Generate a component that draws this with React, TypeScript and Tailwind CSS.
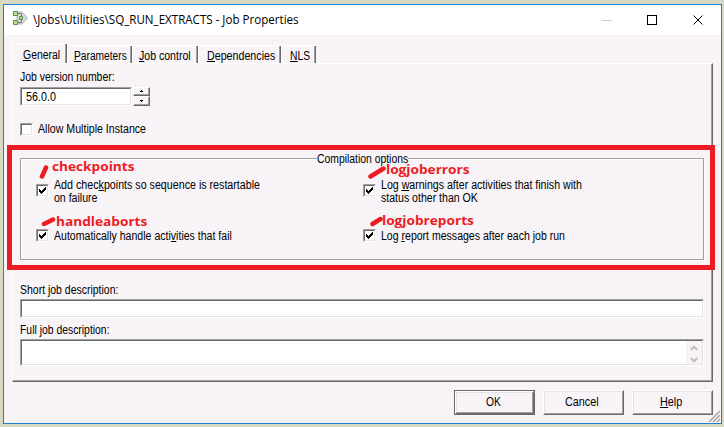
import type { ReactNode } from "react";

const raised =
  "border border-t-white border-l-white border-r-[#696969] border-b-[#696969]";
const sunken =
  "border border-t-[#a0a0a0] border-l-[#a0a0a0] border-r-white border-b-white";
const sunkenInner =
  "border border-t-[#696969] border-l-[#696969] border-r-[#e3e3e3] border-b-[#e3e3e3]";

function Text({ children, className = "" }: { children: ReactNode; className?: string }) {
  return (
    <span className={`block w-max origin-left whitespace-pre text-[12px] leading-[13px] ${className}`}>
      {children}
    </span>
  );
}

function Key({ children }: { children: ReactNode }) {
  return <span className="border-b border-black leading-none inline-block h-[12px]">{children}</span>;
}

function Checkbox({ checked = false }: { checked?: boolean }) {
  return (
    <span className={`block h-[13px] w-[13px] shrink-0 ${sunken}`}>
      <span className={`block h-full w-full bg-white ${sunkenInner}`}>
        {checked && (
          <svg width="9" height="9" viewBox="0 0 9 9" shapeRendering="crispEdges">
            <path d="M1 3h1v3H1zM2 4h1v3H2zM3 5h1v3H3zM4 4h1v3H4zM5 3h1v3H5zM6 2h1v3H6zM7 1h1v3H7z" fill="#000" />
          </svg>
        )}
      </span>
    </span>
  );
}

function Tab({ children, className }: { children: ReactNode; className: string }) {
  return (
    <div className={`h-[18px] rounded-tl-[2px] border-t border-l border-white ${className}`}>
      <div className="h-full border-r border-r-[#696969]">
        <div className="h-full border-r border-r-[#a0a0a0] pt-[4px]">{children}</div>
      </div>
    </div>
  );
}

function Button({ children, primary = false }: { children: ReactNode; primary?: boolean }) {
  return (
    <button
      className={`block h-[25px] w-[81px] ${primary ? "border border-[#696969]" : ""}`}
    >
      <span className={`block h-full w-full ${raised}`}>
        <span className="flex h-full w-full items-center justify-center border border-t-[#e3e3e3] border-l-[#e3e3e3] border-r-[#a0a0a0] border-b-[#a0a0a0]">
          {children}
        </span>
      </span>
    </button>
  );
}

function Spin({ up = false }: { up?: boolean }) {
  return (
    <div className={`w-[17px] ${up ? "h-[9px]" : "h-[10px]"} ${raised}`}>
      <div className="flex h-full items-center justify-center border-r border-b border-[#a0a0a0]">
        <svg width="3" height="2" viewBox="0 0 3 2" shapeRendering="crispEdges">
          <path d={up ? "M1 0h1v1h1v1H0V1h1z" : "M0 0h3v1H2v1H1V1H0z"} />
        </svg>
      </div>
    </div>
  );
}

function Note({ children, className }: { children: ReactNode; className: string }) {
  return (
    <span
      className={`absolute origin-left scale-x-[1.05] whitespace-nowrap font-['Open_Sans',sans-serif] text-[13px] leading-[12px] font-bold text-[#ed1c24] ${className}`}
    >
      {children}
    </span>
  );
}

export default function App() {
  return (
    <div className="h-[427px] w-[724px] overflow-hidden bg-[#d6dac2] pt-1 pl-[3px] font-['Liberation_Sans',Arial,sans-serif] text-black">
      <div className="relative flex h-[420px] w-[719px] flex-col border border-[#1a82d0] bg-[#f7f3f7]">
        <header className="flex h-[30px] shrink-0 items-center bg-white pl-2">
          <svg width="16" height="16" viewBox="0 0 16 16" className="-mt-1 shrink-0">
            <path d="M5 2h5l5.500 6L10 14H5z" fill="#d9d9d9" stroke="#b5b5b5" />
            <path d="M6 3.500h3.500v3M6 12.500h3.500v-3" fill="none" stroke="#777" />
            <g fill="#b5e388" stroke="#569455">
              <path d="M1.500 1.500h4v4h-4zM7.500 6.500h3v3h-3zM1.500 10.500h4v4h-4z" />
            </g>
          </svg>
          <span className="ml-[5px] block w-max origin-left scale-x-[0.965] font-['Open_Sans',sans-serif] text-[12px] leading-[20px] whitespace-nowrap">
            \Jobs\Utilities\SQ_RUN_EXTRACTS - Job Properties
          </span>
          <svg width="102" height="10" viewBox="0 0 102 10" className="mr-[17px] ml-auto shrink-0" shapeRendering="crispEdges">
            <path d="M0 5h10v1H0z" fill="#ccc" />
            <path d="M45.500 .5h9v9h-9z" fill="none" stroke="#000" />
            <path d="M91.500 .5l9 9m0-9l-9 9" fill="none" stroke="#000" shapeRendering="auto" />
          </svg>
        </header>

        <div className="flex h-[28px] shrink-0 items-end pl-2">
          <div className="h-[20px] w-[55px] rounded-tl-[2px] border-t border-l border-white">
            <div className="h-full border-r border-r-[#696969]">
              <div className="h-full border-r border-r-[#a0a0a0] pt-[5px] pl-[10px]">
                <Text className="scale-x-[0.87]"><Key>G</Key>eneral</Text>
              </div>
            </div>
          </div>
          <Tab className="w-[65px] pl-[6px]"><Text className="scale-x-[0.85]"><Key>P</Key>arameters</Text></Tab>
          <Tab className="w-[66px] pl-[6px]"><Text className="scale-x-[0.88]"><Key>J</Key>ob control</Text></Tab>
          <Tab className="w-[83px] pl-[8px]"><Text className="scale-x-[0.89]"><Key>D</Key>ependencies</Text></Tab>
          <Tab className="w-[35px] pl-[8px]"><Text className="scale-x-[0.86]"><Key>N</Key>LS</Text></Tab>
        </div>

        <main className={`ml-2 h-[319px] w-[701px] shrink-0 ${raised}`}>
          <div className="flex h-full flex-col border-r border-b border-[#a0a0a0] pl-[7px]">
            <Text className="mt-[7px] scale-x-[0.87]">Job version number:</Text>
            <div className="mt-[3px] flex gap-px">
              <div className={`h-[19px] w-[112px] ${sunken}`}>
                <div className={`h-full bg-white pt-[2px] pl-[4px] ${sunkenInner}`}>
                  <Text className="scale-x-[0.9]">56.0.0</Text>
                </div>
              </div>
              <div><Spin up /><Spin /></div>
            </div>
            <div className="mt-[17px] flex gap-[5px]">
              <Checkbox />
              <Text className="scale-x-[0.885]">Allow Multiple Instance</Text>
            </div>

            <fieldset className="relative mt-[22px] h-[102px] w-[684px] border border-[#a0a0a0] shadow-[1px_1px_0_white,inset_1px_1px_0_white]">
              <legend className="absolute top-[-6px] left-[296px] w-[91px] bg-[#f7f3f7]">
                <Text className="scale-x-[0.865]">Compilation options</Text>
              </legend>
              <div className="grid grid-cols-[327px_1fr] gap-y-[12px] pt-[20px] pl-[15px]">
                <div className="flex h-[26px] gap-[5px]">
                  <div className="pt-[5px]"><Checkbox checked /></div>
                  <div>
                    <Text className="scale-x-[0.89]">Add chec<Key>k</Key>points so sequence is restartable</Text>
                    <Text className="scale-x-[0.88]">on failure</Text>
                  </div>
                </div>
                <div className="flex h-[26px] gap-[5px]">
                  <div className="pt-[5px]"><Checkbox checked /></div>
                  <div>
                    <Text className="scale-x-[0.883]">Log <Key>w</Key>arnings after activities that finish with</Text>
                    <Text className="scale-x-[0.88]">status other than OK</Text>
                  </div>
                </div>
                <div className="flex gap-[5px] pt-[12px]">
                  <Checkbox checked />
                  <Text className="mt-px scale-x-[0.88]">Automatically handle acti<Key>v</Key>ities that fail</Text>
                </div>
                <div className="flex gap-[5px] pt-[12px]">
                  <Checkbox checked />
                  <Text className="mt-px scale-x-[0.878]">Log <Key>r</Key>eport messages after each job run</Text>
                </div>
              </div>
            </fieldset>

            <Text className="mt-[24px] scale-x-[0.873]">Short job description:</Text>
            <div className={`mt-[2px] h-[19px] w-[684px] shrink-0 ${sunken}`}>
              <div className={`h-full bg-white ${sunkenInner}`} />
            </div>
            <Text className="mt-[6px] scale-x-[0.866]">Full job description:</Text>
            <div className={`mt-[2px] h-[27px] w-[684px] shrink-0 ${sunken}`}>
              <div className={`flex h-full justify-end bg-white ${sunkenInner}`}>
                <div className="flex w-[16px] flex-col items-center justify-between bg-[#f7f3f7] pt-[4px] pb-px">
                  <svg width="8" height="6" viewBox="0 0 8 6"><path d="M.7 5L4 1.700 7.300 5" fill="none" stroke="#bfbfbf" strokeWidth="2" /></svg>
                  <svg width="8" height="6" viewBox="0 0 8 6"><path d="M.7 1L4 4.300 7.300 1" fill="none" stroke="#bfbfbf" strokeWidth="2" /></svg>
                </div>
              </div>
            </div>
          </div>
        </main>

        <footer className="flex gap-2 pt-2 pl-[450px]">
          <Button primary><Text className="origin-center scale-x-[0.85]">OK</Text></Button>
          <Button><Text className="origin-center scale-x-[0.9]">Cancel</Text></Button>
          <Button><Text className="origin-center scale-x-[0.9]"><Key>H</Key>elp</Text></Button>
        </footer>

        <svg className="absolute right-px bottom-px" width="12" height="12" viewBox="0 0 12 12">
          <path d="M1 12L12 1M5 12l7-7M9 12l3-3" stroke="#a0a0a0" strokeWidth="1.400" />
        </svg>

        <div className="absolute top-[140px] left-[3px] h-[125px] w-[708px] border-[5px] border-[#ed1c24]">
          <Note className="top-[10px] left-[40px]">checkpoints</Note>
          <Note className="top-[65px] left-[44px]">handleaborts</Note>
          <Note className="top-[13px] left-[374px]">logjoberrors</Note>
          <Note className="top-[64px] left-[370px]">logjobreports</Note>
          <svg className="absolute top-0 left-0" width="698" height="115" viewBox="0 0 698 115">
            <path d="M30 26.500l4-9M32 74l9-4.500M358.500 26.500l13-8M360.500 74l8-5" stroke="#ed1c24" strokeWidth="4.500" strokeLinecap="round" />
          </svg>
        </div>
      </div>
    </div>
  );
}
